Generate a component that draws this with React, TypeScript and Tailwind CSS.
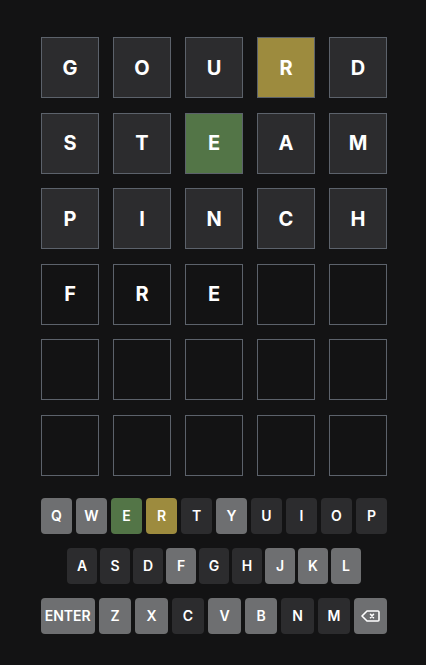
type TileState = "empty" | "filled" | "present" | "correct";

const rows: { letter: string; state: TileState }[][] = [
  [
    { letter: "G", state: "filled" },
    { letter: "O", state: "filled" },
    { letter: "U", state: "filled" },
    { letter: "R", state: "present" },
    { letter: "D", state: "filled" },
  ],
  [
    { letter: "S", state: "filled" },
    { letter: "T", state: "filled" },
    { letter: "E", state: "correct" },
    { letter: "A", state: "filled" },
    { letter: "M", state: "filled" },
  ],
  [
    { letter: "P", state: "filled" },
    { letter: "I", state: "filled" },
    { letter: "N", state: "filled" },
    { letter: "C", state: "filled" },
    { letter: "H", state: "filled" },
  ],
  [
    { letter: "F", state: "empty" },
    { letter: "R", state: "empty" },
    { letter: "E", state: "empty" },
    { letter: "", state: "empty" },
    { letter: "", state: "empty" },
  ],
  Array.from({ length: 5 }, () => ({ letter: "", state: "empty" as TileState })),
  Array.from({ length: 5 }, () => ({ letter: "", state: "empty" as TileState })),
];

const tileBg: Record<TileState, string> = {
  empty: "bg-[#131314]",
  filled: "bg-[#2c2c2e]",
  present: "bg-[#9d8b3e]",
  correct: "bg-[#537547]",
};

type KeyState = "gray" | "dark" | "present" | "correct";

const keyBg: Record<KeyState, string> = {
  gray: "bg-[#6e6f71]",
  dark: "bg-[#2c2c2e]",
  present: "bg-[#9d8b3e]",
  correct: "bg-[#537547]",
};

const keyRow1: [string, KeyState][] = [
  ["Q", "gray"], ["W", "gray"], ["E", "correct"], ["R", "present"], ["T", "dark"],
  ["Y", "gray"], ["U", "dark"], ["I", "dark"], ["O", "dark"], ["P", "dark"],
];
const keyRow2: [string, KeyState][] = [
  ["A", "dark"], ["S", "dark"], ["D", "dark"], ["F", "gray"], ["G", "dark"],
  ["H", "dark"], ["J", "gray"], ["K", "gray"], ["L", "gray"],
];
const keyRow3: [string, KeyState][] = [
  ["Z", "gray"], ["X", "gray"], ["C", "dark"], ["V", "gray"], ["B", "gray"],
  ["N", "dark"], ["M", "dark"],
];

const Key = ({ label, state, width }: { label: string; state: KeyState; width: string }) => (
  <div
    className={`${width} h-[36px] rounded-[4px] ${keyBg[state]} flex items-center justify-center text-white text-[14px] font-semibold`}
  >
    {label}
  </div>
);

const Backspace = () => (
  <div className="w-[33px] h-[36px] rounded-[4px] bg-[#6e6f71] flex items-center justify-center">
    <svg width="19" height="12" viewBox="0 0 19 12" fill="none" stroke="white" strokeWidth="1.6" strokeLinejoin="round" strokeLinecap="round">
      <path d="M6 1h11a1 1 0 0 1 1 1v8a1 1 0 0 1-1 1H6L1 6z" />
      <path d="M9.5 4.3l3 3.4M12.5 4.3l-3 3.4" />
    </svg>
  </div>
);

export default function App() {
  return (
    <div
      className="w-[426px] h-[665px] bg-[#131314] flex flex-col pl-[41px] pt-[37px]"
      style={{ fontFamily: "Inter, 'Liberation Sans', sans-serif" }}
    >
      <div className="w-[346px] flex flex-col gap-[14.6px]">
        {rows.map((row, r) => (
          <div key={r} className="flex gap-[14px]">
            {row.map((t, i) => (
              <div
                key={i}
                className={`w-[58px] h-[61px] border border-[#5c626b] ${tileBg[t.state]} flex items-center justify-center text-white text-[20px] font-bold`}
              >
                {t.letter}
              </div>
            ))}
          </div>
        ))}
      </div>

      <div className="w-[346px] flex flex-col items-center mt-[22px] gap-[14px]">
        <div className="flex gap-[4px]">
          {keyRow1.map(([l, s]) => (
            <Key key={l} label={l} state={s} width="w-[31px]" />
          ))}
        </div>
        <div className="flex gap-[3px]">
          {keyRow2.map(([l, s]) => (
            <Key key={l} label={l} state={s} width="w-[30px]" />
          ))}
        </div>
        <div className="flex gap-[4px]">
          <Key label="ENTER" state="gray" width="w-[54px]" />
          {keyRow3.map(([l, s]) => (
            <Key key={l} label={l} state={s} width="w-[32.5px]" />
          ))}
          <Backspace />
        </div>
      </div>
    </div>
  );
}
